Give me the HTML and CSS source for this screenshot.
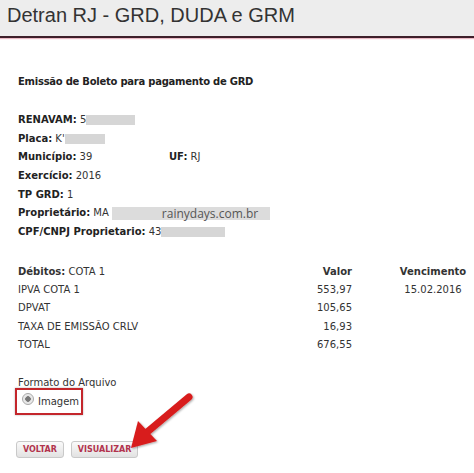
FILE: index.html
```html
<!DOCTYPE html>
<html lang="pt-BR">
<head>
  <meta charset="UTF-8">
  <title>Detran RJ - GRD, DUDA e GRM</title>
  <link rel="stylesheet" href="styles.css">
</head>
<body>

<div class="header">Detran RJ - GRD, DUDA e GRM</div>

<div class="content">
  <h2>Emissão de Boleto para pagamento de GRD</h2>

  <!-- Dados do veiculo -->
  <div class="dados">
    <div class="row"><b>RENAVAM:</b> 5<span class="blur" style="width:49px"></span></div>
    <div class="row"><b>Placa:</b> K'<span class="blur" style="width:40px"></span></div>
    <div class="row"><span class="col-left"><b>Município:</b> 39</span><b>UF:</b> RJ</div>
    <div class="row"><b>Exercício:</b> 2016</div>
    <div class="row"><b>TP GRD:</b> 1</div>
    <div class="row"><b>Proprietário:</b> MA<span class="blur watermark">rainydays.com.br</span></div>
    <div class="row"><b>CPF/CNPJ Proprietario:</b> 43<span class="blur" style="width:64px"></span></div>
  </div>

  <!-- Debitos -->
  <div class="debitos">
    <div><b>Débitos:</b> COTA 1</div><div class="valor"><b>Valor</b></div><div class="venc"><b>Vencimento</b></div>
    <div>IPVA COTA 1</div><div class="valor">553,97</div><div class="venc">15.02.2016</div>
    <div>DPVAT</div><div class="valor">105,65</div><div class="venc"></div>
    <div>TAXA DE EMISSÃO CRLV</div><div class="valor">16,93</div><div class="venc"></div>
    <div>TOTAL</div><div class="valor">676,55</div><div class="venc"></div>
  </div>

  <div class="formato">
    <div>Formato do Arquivo</div>
    <label class="opcao">
      <input type="radio" name="formato" checked> Imagem
    </label>
  </div>

  <div class="botoes">
    <button>VOLTAR</button>
    <button>VISUALIZAR</button>
  </div>
</div>

<!-- seta vermelha -->
<svg class="seta" width="80" height="70" viewBox="0 0 80 70">
  <defs>
    <filter id="sombra" x="-20%" y="-20%" width="140%" height="140%">
      <feDropShadow dx="1" dy="1" stdDeviation="1.2" flood-color="#000" flood-opacity="0.35"/>
    </filter>
  </defs>
  <g filter="url(#sombra)">
    <line x1="63" y1="9" x2="20" y2="45" stroke="#d81e1e" stroke-width="7" stroke-linecap="round"/>
    <polygon points="5,60 12,33 31,53" fill="#d81e1e"/>
  </g>
</svg>

</body>
</html>
```

FILE: styles.css
```css
body {
  margin: 0;
  background: #fff;
  font-family: "DejaVu Sans", Verdana, sans-serif;
  font-size: 10px;
  color: #333;
}

.header {
  height: 36px;
  padding-left: 7px;
  background: #ededed;
  border-bottom: 2px solid #3e1f2a;
  box-shadow: 0 1px 1px #e9b9c4;
  font-family: "Liberation Sans", Arial, sans-serif;
  font-size: 20px;
  line-height: 30px;
  color: #333;
}

.content {
  padding: 0 0 0 18px;
}

h2 {
  margin: 38px 0 0;
  font-size: 10px;
  line-height: 12px;
  letter-spacing: -0.25px;
  color: #222;
}

.dados {
  margin-top: 23px;
}

.row {
  height: 18.7px;
  line-height: 18.7px;
  white-space: nowrap;
}

.row b {
  color: #222;
}

.col-left {
  display: inline-block;
  width: 151px;
}

.blur {
  display: inline-block;
  vertical-align: middle;
  height: 10px;
  background: #d6d6d6;
}

.watermark {
  width: 158px;
  height: 13px;
  margin-left: 3px;
  padding-left: 50px;
  box-sizing: border-box;
  font-family: "Open Sans", sans-serif;
  font-size: 12px;
  line-height: 13px;
  color: #555;
  background: #dcdcdc;
}

.debitos {
  margin-top: 20px;
  display: grid;
  grid-template-columns: 282px 52px 1fr;
  grid-auto-rows: 18.4px;
  align-items: center;
}

.debitos .valor {
  text-align: right;
}

.debitos .venc {
  padding-left: 40px;
  text-align: center;
}

.formato {
  margin-top: 23px;
}

.opcao {
  margin: 0 0 0 -3px;
  width: 64px;
  height: 23px;
  display: flex;
  align-items: center;
  gap: 4px;
  border: 2px solid #c4262b;
  box-shadow: 0 0 2px rgba(0, 0, 0, 0.3);
  font-size: 10px;
}

.opcao input {
  appearance: none;
  margin: 0 0 5px 5px;
  width: 12px;
  height: 12px;
  border: 1px solid #a8a8a8;
  border-radius: 50%;
  background: radial-gradient(circle, #777 0 2.5px, #e4e4e4 3px, #f4f4f4 100%);
  box-sizing: border-box;
}

.botoes {
  margin-top: 26px;
  display: flex;
  gap: 7px;
  margin-left: -2px;
}

button {
  height: 17px;
  padding: 0 6px;
  border: 1px solid #c9c9c9;
  border-radius: 3px;
  background: linear-gradient(#fafafa, #e2e2e2);
  font-family: "DejaVu Sans", Verdana, sans-serif;
  font-size: 8px;
  font-weight: bold;
  color: #b2334d;
}

.seta {
  position: absolute;
  left: 126px;
  top: 388px;
}
```
